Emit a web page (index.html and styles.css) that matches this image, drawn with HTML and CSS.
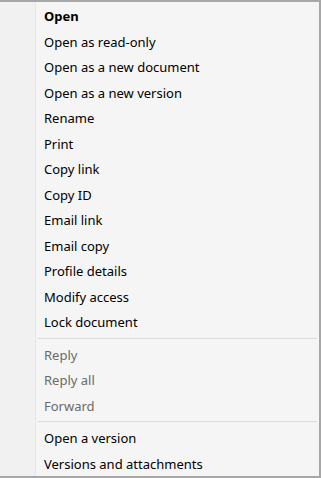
FILE: index.html
```html
<!DOCTYPE html>
<html>
<head>
<meta charset="utf-8">
<link rel="stylesheet" href="styles.css">
</head>
<body>
<div class="menu">
  <div class="gutter"></div>
  <div class="items">
    <div class="item bold">Open</div>
    <div class="item">Open as read-only</div>
    <div class="item">Open as a new document</div>
    <div class="item">Open as a new version</div>
    <div class="item">Rename</div>
    <div class="item">Print</div>
    <div class="item">Copy link</div>
    <div class="item">Copy ID</div>
    <div class="item">Email link</div>
    <div class="item">Email copy</div>
    <div class="item">Profile details</div>
    <div class="item">Modify access</div>
    <div class="item">Lock document</div>
    <div class="sep"></div>
    <div class="item disabled">Reply</div>
    <div class="item disabled">Reply all</div>
    <div class="item disabled">Forward</div>
    <div class="sep"></div>
    <div class="item">Open a version</div>
    <div class="item">Versions and attachments</div>
  </div>
</div>
</body>
</html>
```
FILE: styles.css
```css
html, body {
  margin: 0;
  padding: 0;
  background: #f5f5f5;
}
.menu {
  width: 321px;
  height: 478px;
  box-sizing: border-box;
  border-top: 2px solid #a7a7a7;
  border-right: 2px solid #a7a7a7;
  border-bottom: 2px solid #a7a7a7;
  display: flex;
  background: #f5f5f5;
  font-family: "Noto Sans", sans-serif;
  font-size: 13px;
  color: #000;
}
.gutter {
  width: 35px;
  flex: none;
  background: #f1f1f1;
  border-right: 1px solid #e6e6e6;
}
.items {
  flex: 1;
  padding-top: 2px;
  padding-right: 2px;
}
.item {
  height: 25.5px;
  line-height: 25.5px;
  padding-left: 8px;
  white-space: nowrap;
}
.bold {
  font-weight: bold;
}
.disabled {
  color: #6a6a6a;
}
.sep {
  height: 1px;
  margin: 2px 0 4px 2px;
  background: #dadada;
}
```
